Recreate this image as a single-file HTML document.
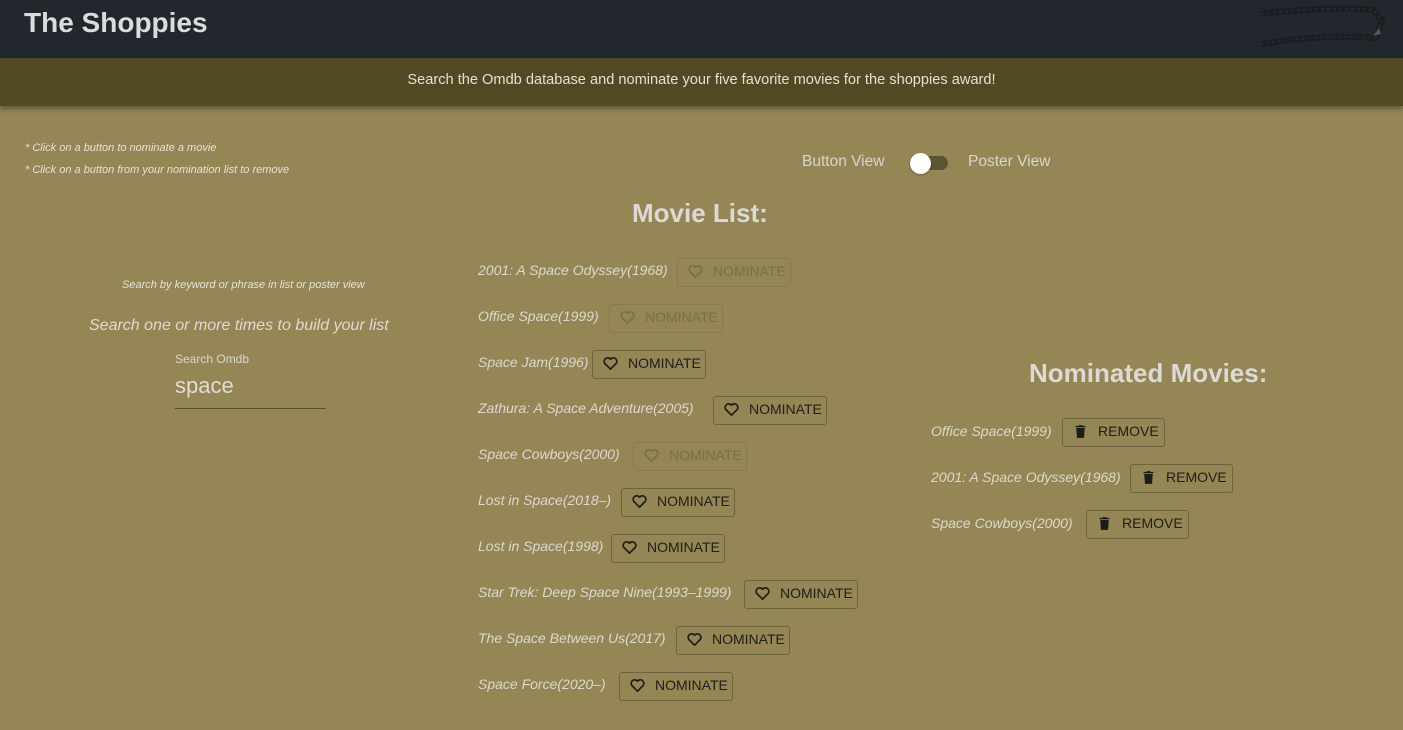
<!DOCTYPE html>
<html><head><style>
*{box-sizing:border-box;margin:0;padding:0}
body{width:1403px;height:730px;overflow:hidden;background:#948755;font-family:"Liberation Sans",sans-serif;color:#d9d6cf;position:relative}
.hdr{position:absolute;left:0;top:0;width:1403px;height:58px;background:#22272d}
.hdr h1{position:absolute;left:24px;top:7px;font-size:28px;font-weight:bold;color:#dcdcdc}
.ban{position:absolute;left:0;top:58px;width:1403px;height:48px;background:#524923;box-shadow:0 3px 5px rgba(0,0,0,.35);text-align:center;line-height:45px;font-size:14.6px;color:#e4e0d6}
.abs{position:absolute;white-space:nowrap}
.note{font-size:11px;font-style:italic;color:#e6e3da}
.t{font-style:italic;font-size:14px;color:#dcd9d0}
.btn{position:absolute;height:29px;border:1px solid #6e6540;border-radius:3px;font-size:14px;color:#1e1e1a;display:flex;align-items:center;padding-left:9px;padding-bottom:3px;gap:9px;white-space:nowrap}
.btn.dis{color:#7a6f47;border-color:#877c4e}
.btn svg{width:17px;height:17px}
h2{position:absolute;font-size:26px;font-weight:bold;color:#dcdad6;white-space:nowrap}
</style></head><body>
<div class="hdr"><h1>The Shoppies</h1>
<svg style="position:absolute;left:1258px;top:4px" width="130" height="44" viewBox="0 0 130 44"><path d="M3 10 Q70 2 115 6 L124 16 L118 34 Q60 30 3 40" fill="none" stroke="#1a1d21" stroke-width="6"/><path d="M3 10 Q70 2 115 6 L124 16 L118 34 Q60 30 3 40" fill="none" stroke="#262a30" stroke-width="2" stroke-dasharray="3 3"/><path d="M115 32 l6 -8 l2 6z" fill="#555"/></svg></div>
<div class="ban">Search the Omdb database and nominate your five favorite movies for the shoppies award!</div>
<div class="abs note" style="left:25px;top:142px">* Click on a button to nominate a movie</div>
<div class="abs note" style="left:25px;top:164px">* Click on a button from your nomination list to remove</div>
<div class="abs" style="left:802px;top:153px;font-size:15.5px">Button View</div>
<div class="abs" style="left:968px;top:153px;font-size:15.5px">Poster View</div>
<div class="abs" style="left:914px;top:156px;width:34px;height:14px;border-radius:7px;background:#5b5435"></div>
<div class="abs" style="left:910px;top:153px;width:21px;height:21px;border-radius:50%;background:#fff;box-shadow:0 1px 2px rgba(0,0,0,.3)"></div>
<h2 style="left:632px;top:198px">Movie List:</h2>
<h2 style="left:1029px;top:358px">Nominated Movies:</h2>
<div class="abs note" style="left:122px;top:279px">Search by keyword or phrase in list or poster view</div>
<div class="abs" style="left:89px;top:317px;font-size:16px;font-style:italic;color:#dedbd2">Search one or more times to build your list</div>
<div class="abs" style="left:175px;top:352px;font-size:12px">Search Omdb</div>
<div class="abs" style="left:175px;top:373px;font-size:22px;color:#e0ddd4">space</div>
<div class="abs" style="left:175px;top:408px;width:151px;height:1px;background:#57502f"></div>
<div id="list"></div>
<script>
const H='<svg viewBox="0 0 24 24"><path d="M12 20 L4 12 A4.6 4.6 0 0 1 12 6 A4.6 4.6 0 0 1 20 12 Z" fill="none" stroke="currentColor" stroke-width="2.4" stroke-linejoin="round"/></svg>';
const T='<svg viewBox="0 0 24 24"><path d="M6 7h12l-1 14H7z M5 4h4l1-1h4l1 1h4v2H5z" fill="#1b1b18"/></svg>';
const m=[["2001: A Space Odyssey(1968)",677,1],["Office Space(1999)",609,1],["Space Jam(1996)",592,0],["Zathura: A Space Adventure(2005)",713,0],["Space Cowboys(2000)",633,1],["Lost in Space(2018–)",621,0],["Lost in Space(1998)",611,0],["Star Trek: Deep Space Nine(1993–1999)",744,0],["The Space Between Us(2017)",676,0],["Space Force(2020–)",619,0]];
let h='';m.forEach((r,i)=>{const y=258+i*46;h+=`<div class="abs t" style="left:478px;top:${y+4}px">${r[0]}</div><div class="btn${r[2]?' dis':''}" style="left:${r[1]}px;top:${y}px;width:114px">${H}NOMINATE</div>`});
const n=[["Office Space(1999)",1062],["2001: A Space Odyssey(1968)",1130],["Space Cowboys(2000)",1086]];
n.forEach((r,i)=>{const y=418+i*46;h+=`<div class="abs t" style="left:931px;top:${y+5}px">${r[0]}</div><div class="btn" style="left:${r[1]}px;top:${y}px;width:103px">${T}REMOVE</div>`});
document.getElementById('list').innerHTML=h;
</script>
</body></html>
